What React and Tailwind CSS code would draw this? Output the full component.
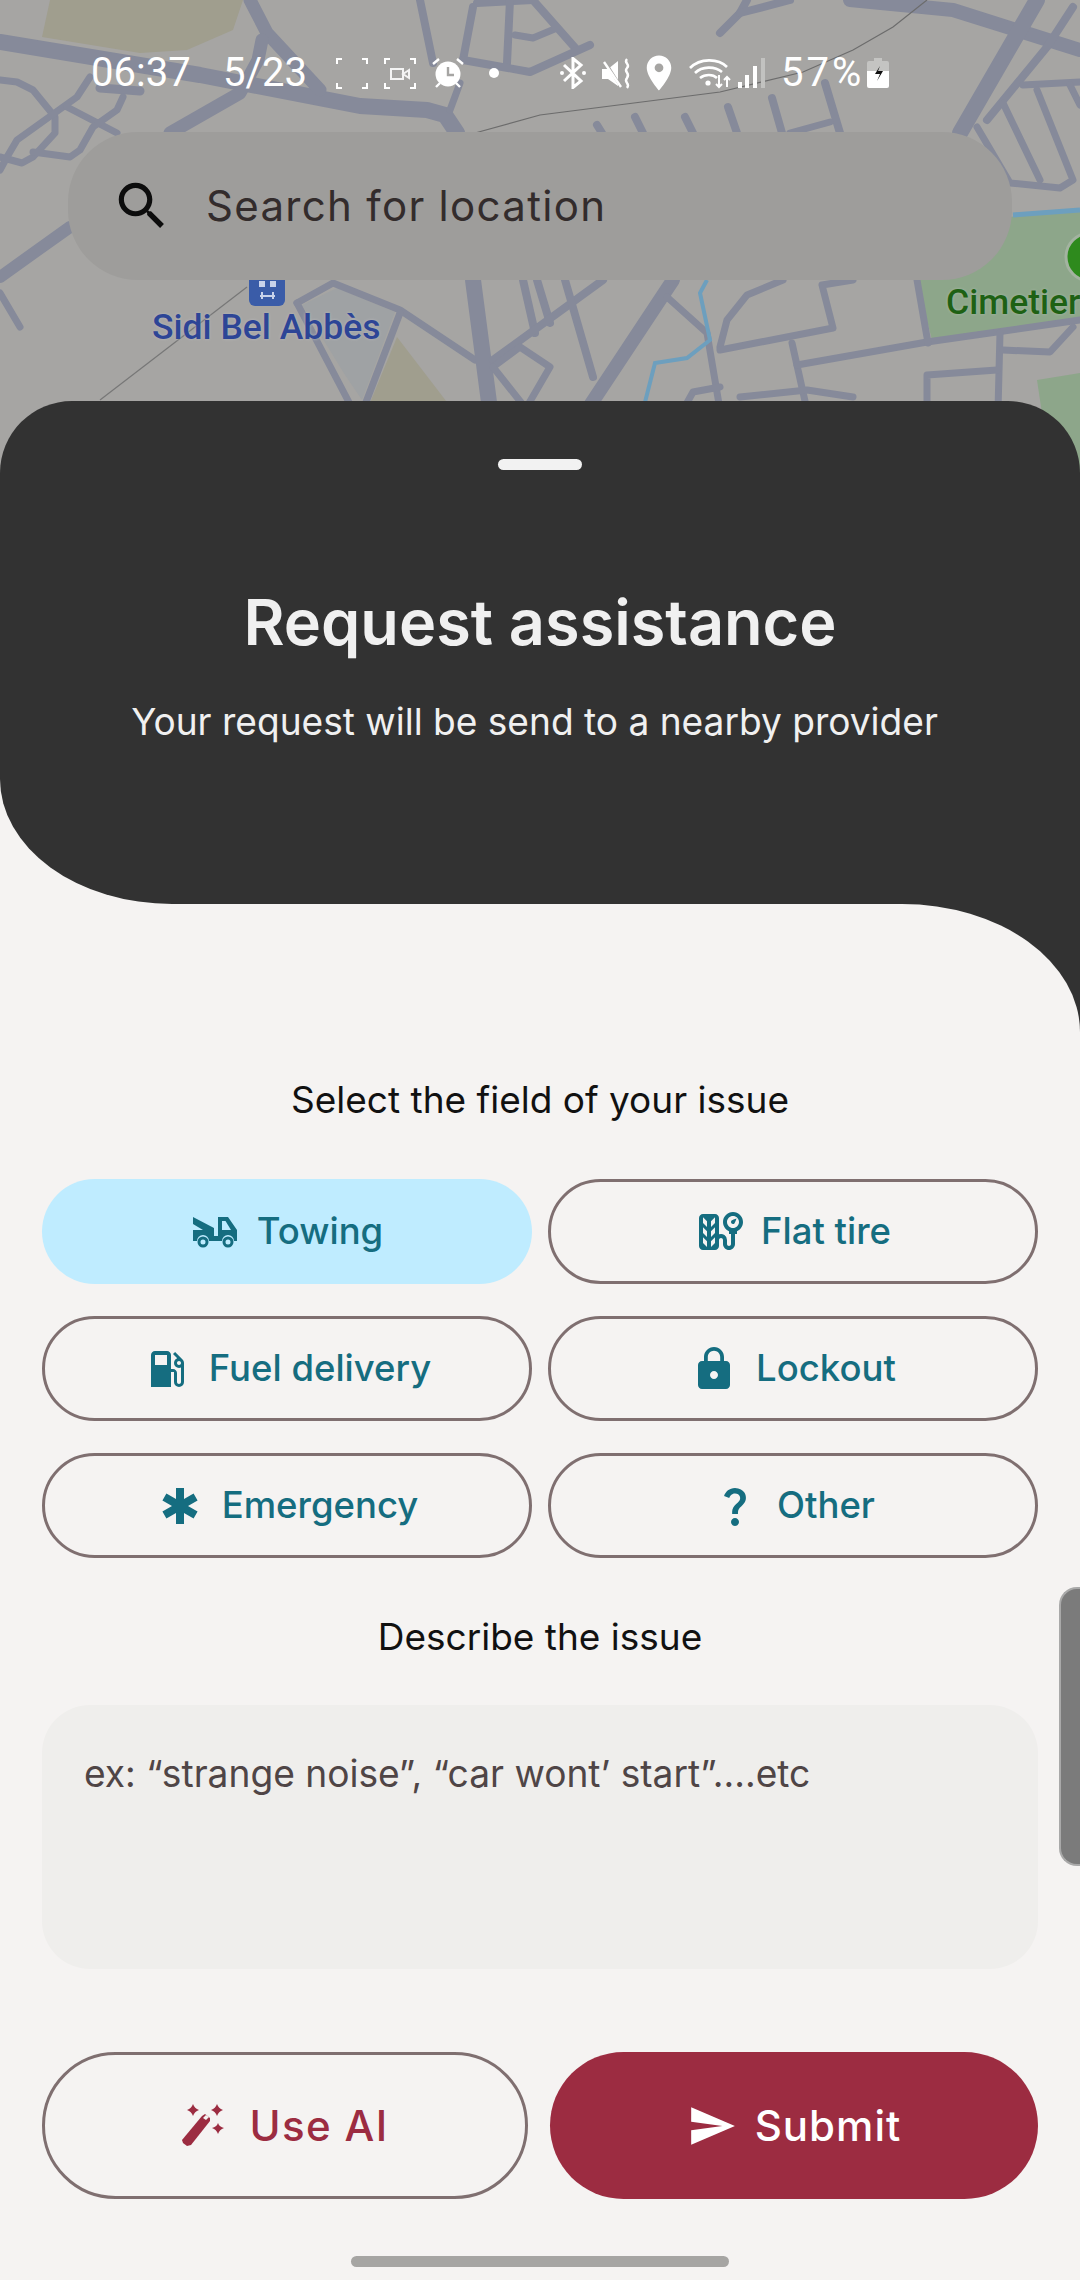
import React from "react";
import { MdTireRepair, MdLocalGasStation, MdLock, MdEmergency, MdQuestionMark, MdSend, MdLocationOn } from "react-icons/md";

const ROADS = [
  [16, "0,42 200,75 360,106 427,110 445,115 457,133"],
  [13, "250,0 267,33 320,90"],
  [13, "262,40 258,60 240,93 170,133"],
  [7, "0,80 17,82 33,90 55,117 55,133 33,157 22,163 0,157"],
  [7, "90,77 77,97 17,140 7,157 0,170"],
  [7, "67,107 117,133"],
  [9, "100,88 140,91"],
  [7, "123,97 117,110 93,127 80,150 70,157 33,152"],
  [12, "0,277 70,227"],
  [7, "0,293 20,327"],
  [7, "297,303 333,283 400,310 475,360"],
  [7, "400,313 363,410"],
  [7, "297,303 353,410"],
  [16, "473,280 490,410"],
  [8, "523,280 535,333"],
  [8, "537,280 550,323"],
  [8, "493,360 603,280"],
  [8, "565,280 593,377"],
  [14, "673,280 587,410"],
  [7, "493,367 520,347 550,367 525,410"],
  [7, "493,367 527,410"],
  [7, "667,297 707,333 720,410"],
  [7, "683,410 693,392 720,387"],
  [8, "420,0 433,63"],
  [8, "477,3 533,0"],
  [8, "473,7 463,60"],
  [8, "510,0 507,63"],
  [7, "515,35 533,38 557,28"],
  [8, "533,0 577,50"],
  [8, "463,60 530,72 590,45"],
  [7, "460,83 450,110"],
  [8, "597,125 602,133"],
  [8, "635,117 643,133"],
  [8, "685,117 693,133"],
  [8, "728,107 737,133"],
  [8, "772,98 782,133"],
  [8, "825,83 840,133"],
  [7, "790,133 830,122"],
  [8, "720,33 740,13 747,0"],
  [8, "740,13 790,0"],
  [14, "850,0 953,10 1080,50"],
  [16, "1037,0 960,133"],
  [8, "1073,7 1047,47 987,120"],
  [7, "1023,85 1080,82"],
  [7, "977,127 1010,183 1060,188 1073,180 1037,90"],
  [7, "1003,103 1040,180"],
  [7, "1070,85 1080,105"],
  [7, "783,280 747,295 727,320 720,347"],
  [7, "853,280 822,285 833,328 720,350"],
  [7, "792,343 807,410"],
  [7, "797,365 927,342 1080,320"],
  [7, "917,280 928,343"],
  [7, "1000,333 998,410"],
  [7, "1003,350 1050,352 1073,327"],
  [7, "927,410 927,375 997,370"],
  [7, "740,397 807,390 853,397"],
];

function MapDrawing() {
  return (
    <svg viewBox="0 0 1080 480" className="absolute left-0 top-0 w-[1080px] h-[480px]">
      <rect width="1080" height="480" fill="#a6a5a3" />
      <polygon points="50,0 42,37 140,53 187,50 233,30 243,0" fill="#a09e8e" />
      <polygon points="397,337 453,410 367,410" fill="#a09e8e" />
      <polygon points="337,288 395,312 362,400 345,375 302,305" fill="#9fa2a4" />
      <polygon points="923,223 1080,212 1080,318 932,340 917,280" fill="#8da68a" />
      <polygon points="1037,380 1080,373 1080,480 1052,480" fill="#8da68a" />
      {ROADS.map(([w, p], i) => (
        <polyline key={i} points={p} fill="none" stroke="#868a9a" strokeWidth={w} strokeLinecap="round" strokeLinejoin="round" />
      ))}
      <polyline points="707,280 700,293 710,340 687,358 655,363 643,410" fill="none" stroke="#6d9fbe" strokeWidth="4" />
      <polyline points="1013,215 1080,210" fill="none" stroke="#6d9fbe" strokeWidth="5" />
      <polyline points="475,133 540,115 720,92 803,72 853,50 893,27 927,0" fill="none" stroke="#6c6c6c" strokeWidth="1.2" />
      <polyline points="100,400 247,287" fill="none" stroke="#777" strokeWidth="1.2" />
      <circle cx="1090" cy="257" r="24" fill="#2e8a1d" stroke="#a3b3a0" strokeWidth="3" />
      <rect x="249" y="270" width="36" height="36" rx="6" fill="#3a5ca8" />
      <rect x="259" y="281" width="6" height="6" fill="#c8d2ea" />
      <rect x="270" y="281" width="6" height="6" fill="#c8d2ea" />
      <path d="M260 296h15M262 292v7M273 292v7" stroke="#c8d2ea" strokeWidth="2" fill="none" />
    </svg>
  );
}

function Frame({ children }) {
  return (
    <svg width="32" height="31" viewBox="0 0 32 31" fill="none" stroke="#fff" strokeWidth="2">
      <path d="M6 1H1v5M26 1h5v5M6 30H1v-5M26 30h5v-5" />
      {children}
    </svg>
  );
}

function StatusBar() {
  return (
    <div className="relative h-[58px] flex items-center pl-[91px] text-white text-[40px] font-['Roboto',sans-serif] leading-none">
      <span className="w-[132px]">06:37</span>
      <span className="w-[113px]">5/23</span>
      <div className="flex items-center gap-[16px]">
        <Frame />
        <Frame>
          <rect x="7" y="11" width="12" height="10" stroke="#f4f4f4" strokeWidth="2" />
          <path d="M19 16l6-4v8z" stroke="#f4f4f4" strokeWidth="2" />
        </Frame>
        <svg width="32" height="32" viewBox="0 0 32 32">
          <circle cx="16" cy="17" r="12.5" fill="#fff" />
          <path d="M16 10v8h6" stroke="#a6a5a3" strokeWidth="2.4" fill="none" />
          <path d="M1 7l6-5M31 7l-6-5M4 30l4-4M28 30l-4-4" stroke="#fff" strokeWidth="2.4" />
        </svg>
      </div>
      <span className="w-[10px] h-[10px] rounded-full bg-white ml-[25px]" />
      <svg width="28" height="32" viewBox="0 0 28 32" className="ml-[60px]" fill="none" stroke="#fff" strokeWidth="3">
        <path d="M5 8l17 16-8 6.500V1.500l8 6.500L5 24" />
        <circle cx="3" cy="16" r="2" fill="#fff" stroke="none" />
        <circle cx="25" cy="16" r="2" fill="#fff" stroke="none" />
      </svg>
      <svg width="30" height="31" viewBox="0 0 30 31" className="ml-[15px]" fill="#fff">
        <path d="M0 11h6l10-8v25l-10-7H0z" />
        <path d="M2 2l17 27" stroke="#a6a5a3" strokeWidth="2.6" />
        <path d="M2 4l17 25" stroke="#fff" strokeWidth="2.4" />
        <path d="M25 1c-4 4 4 5 0 9s4 5 0 10 4 5 0 10" stroke="#fff" strokeWidth="2.4" fill="none" />
      </svg>
      <MdLocationOn className="ml-[8px] w-[42px] h-[42px] -mr-[9px] -translate-x-[2px] shrink-0" />
      <svg width="45" height="32" viewBox="0 0 45 32" className="ml-[16px]" fill="none" stroke="#fff" strokeWidth="2.6">
        <path d="M1 11C11 1 29 1 38 10M6 16C13 9 26 9 33 15M11 21c5-4 13-4 17 0" />
        <circle cx="19" cy="26" r="2.6" fill="#fff" stroke="none" />
        <path d="M30 18v12M27 27l3 3 3-3M38 30V20M35 23l3-3 3 3" strokeWidth="2" />
      </svg>
      <svg width="28" height="30" viewBox="0 0 28 30" className="ml-[4px]" fill="#fff">
        <rect x="0" y="24" width="4" height="6" />
        <rect x="7" y="17" width="4" height="13" />
        <rect x="15" y="8" width="4" height="22" />
        <rect x="23" y="0" width="4" height="30" fill="#c2c2c0" />
      </svg>
      <span className="ml-[15px] w-[86px] tracking-[3px]">57%</span>
      <svg width="22" height="30" viewBox="0 0 22 30">
        <path d="M7 0h8v3h5a2 2 0 0 1 2 2v8H0V5a2 2 0 0 1 2-2h5z" fill="#c4c4c2" />
        <path d="M0 13h22v15a2 2 0 0 1-2 2H2a2 2 0 0 1-2-2z" fill="#fff" />
        <path d="M13 8l-5 8h5l-3 7 6-10h-5z" fill="#111" />
      </svg>
    </div>
  );
}

function TowIcon() {
  return (
    <svg width="44" height="32" viewBox="0 0 44 32" fill="#156d80" className="mx-[2px]">
      <path d="M0 1l21 11V20h4V1h10l9 13v11h-3a6 6 0 0 0-12 0H16a6 6 0 0 0-12 0H0V14h10L0 8z" />
      <path d="M29 5v9h9l-5.500-9z" fill="#bfecff" />
      <circle cx="10" cy="26" r="4" fill="none" stroke="#156d80" strokeWidth="3" />
      <circle cx="35" cy="26" r="4" fill="none" stroke="#156d80" strokeWidth="3" />
    </svg>
  );
}

function WandIcon() {
  return (
    <svg width="44" height="46" viewBox="0 0 44 46" fill="#9c2c41">
      <path d="M1 38L21 14l3-2 5 4v3L10 43l-4 1-4-3z" transform="translate(0 -1)" />
      <path d="M22 15l3-3 3 2-3 3z" fill="#f5f3f2" />
      <path d="M12 1c1 3 3 5 6 6-3 1-5 3-6 6-1-3-3-5-6-6 3-1 5-3 6-6zM36 1c1 3 3 5 6 6-3 1-5 3-6 6-1-3-3-5-6-6 3-1 5-3 6-6zM37 20c1 3 3 4 6 5-3 1-5 3-6 6-1-3-3-5-6-6 3-1 5-2 6-5z" />
    </svg>
  );
}

function Chip({ icon, label, active }) {
  return (
    <div
      className={
        "h-[105px] rounded-full flex items-center justify-center gap-[18px] text-[36.5px] font-medium text-[#156d80] " +
        (active ? "bg-[#bfecff]" : "border-[3px] border-[#7f6f70]")
      }
    >
      {icon}
      <span>{label}</span>
    </div>
  );
}

const ic = "w-[48px] h-[48px]";

export default function App() {
  return (
    <div className="relative w-[1080px] h-[2280px] overflow-hidden bg-[#f5f3f2] font-['Inter',sans-serif]">
      <div className="relative h-[401px] pt-[44px]">
        <MapDrawing />
        <StatusBar />
        <div className="relative mx-[68px] mt-[30px] h-[148px] rounded-[70px] bg-[#9e9d9b] flex items-center pl-[43px]">
          <svg viewBox="0 0 24 24" className="w-[62px] h-[62px] shrink-0" fill="#0d0d0d">
            <path d="M15.5 14h-.79l-.28-.27C15.41 12.59 16 11.11 16 9.5 16 5.91 13.09 3 9.5 3S3 5.91 3 9.5 5.91 16 9.5 16c1.61 0 3.09-.59 4.23-1.57l.27.28v.79l5 4.99L20.49 19l-4.99-5zm-6 0C7.01 14 5 11.99 5 9.5S7.01 5 9.5 5 14 7.01 14 9.5 11.99 14 9.5 14z" />
          </svg>
          <span className="ml-[33px] text-[42px] tracking-[1.3px] text-[#332c2c] leading-none">Search for location</span>
        </div>
        <div className="absolute left-[152px] top-[306px] text-[35.5px] leading-[42px] text-[#2d4596] font-['Roboto',sans-serif] font-medium [text-shadow:0_0_3px_#b9b9bd]">Sidi Bel Abbès</div>
        <div className="absolute left-[946px] top-[281px] text-[35.5px] leading-[42px] text-[#1e6114] font-['Roboto',sans-serif] font-medium whitespace-nowrap [text-shadow:0_0_3px_#a9bca8]">Cimetiere</div>
      </div>

      <div className="relative bg-[linear-gradient(to_bottom,transparent_50%,#f5f3f2_50%)]">
        <div className="h-[503px] bg-[#323232] rounded-t-[72px] rounded-bl-[172px_125px] flex flex-col items-center">
          <div className="mt-[58px] w-[84px] h-[11px] rounded-full bg-[#f2f2f2]" />
          <h1 className="mt-[116px] text-[63px] leading-[72px] font-semibold text-[#f0f0f0]">Request assistance</h1>
          <p className="mt-[42px] pr-[11px] text-[37.1px] leading-[44px] text-[#f0f0f0]">Your request will be send to a nearby provider</p>
        </div>
      </div>

      <div className="relative">
        <div className="absolute right-0 top-0 w-[178px] h-[128px] bg-[#323232]" />
        <div className="relative bg-[#f5f3f2] rounded-tr-[178px_128px] h-[1376px] px-[42px] flex flex-col">
          <p className="mt-[174px] text-center text-[37px] leading-[44px] text-[#111]">Select the field of your issue</p>
          <div className="mt-[57px] grid grid-cols-2 gap-x-[16px] gap-y-[32px]">
            <Chip active label="Towing" icon={<TowIcon />} />
            <Chip label="Flat tire" icon={<MdTireRepair className={ic} />} />
            <Chip label="Fuel delivery" icon={<MdLocalGasStation className={ic} />} />
            <Chip label="Lockout" icon={<MdLock className={ic} />} />
            <Chip label="Emergency" icon={<MdEmergency className={ic} />} />
            <Chip label="Other" icon={<MdQuestionMark className={ic} />} />
          </div>
          <p className="mt-[57px] text-center text-[37px] leading-[44px] text-[#111]">Describe the issue</p>
          <div className="mt-[46px] h-[264px] rounded-[48px] bg-[#efeeec] px-[42px] pt-[47px] text-[37.150px] leading-[44px] text-[#4f4546]">
            ex: “strange noise”, “car wont’ start”....etc
          </div>
          <div className="mt-[83px] grid grid-cols-[486px_488px] gap-x-[22px]">
            <div className="h-[147px] rounded-full border-[3px] border-[#7f6f70] flex items-center justify-center gap-[24px] text-[42px] font-medium tracking-[1.4px] text-[#9c2c41]">
              <WandIcon />
              <span>Use AI</span>
            </div>
            <div className="h-[147px] rounded-full bg-[#9c2c41] flex items-center justify-center gap-[18px] text-[42px] font-medium tracking-[1px] text-white">
              <MdSend className="w-[50px] h-[50px]" />
              <span>Submit</span>
            </div>
          </div>
          <div className="mt-[57px] mx-auto w-[378px] h-[11px] rounded-full bg-[#a6a5a3]" />
        </div>
      </div>

      <div className="absolute right-0 top-[1587px] w-[21px] h-[279px] rounded-l-[18px] bg-[#7b7b7b] border-l-2 border-y-2 border-[#a9a9a9]" />
    </div>
  );
}
